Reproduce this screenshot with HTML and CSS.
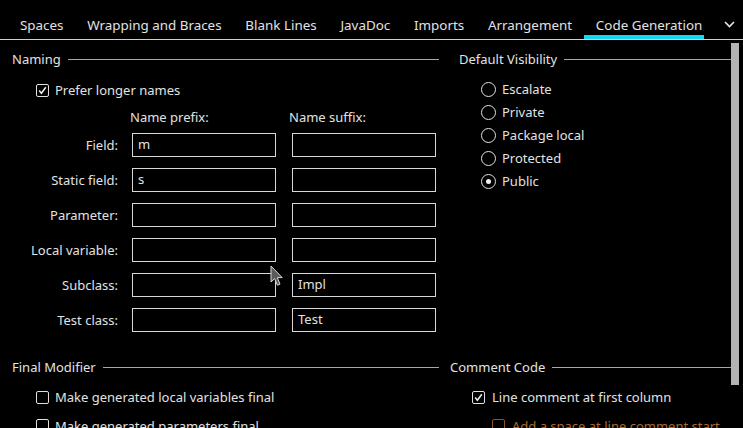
FILE: index.html
```html
<!DOCTYPE html>
<html>
<head>
<meta charset="utf-8">
<link rel="stylesheet" href="styles.css">
</head>
<body>
<div class="tabs">
  <div class="tab">Spaces</div>
  <div class="tab">Wrapping and Braces</div>
  <div class="tab">Blank Lines</div>
  <div class="tab">JavaDoc</div>
  <div class="tab">Imports</div>
  <div class="tab">Arrangement</div>
  <div class="tab active">Code Generation</div>
  <div class="more"><svg width="11" height="7" viewBox="0 0 11 7"><polyline points="1,1 5.5,5.5 10,1" fill="none" stroke="#e8e8e8" stroke-width="1.6"/></svg></div>
</div>
<div class="body">
  <div class="main">
    <div class="top">
      <div class="col-left">
        <div class="sec-title">Naming</div>
        <div class="check-row ind1">
          <span class="box checked"><svg width="11" height="11" viewBox="0 0 11 11"><polyline points="2.2,5.6 4.4,8.2 8.8,2.2" fill="none" stroke="#f0f0f0" stroke-width="1.5"/></svg></span>
          <span>Prefer longer names</span>
        </div>
        <div class="name-grid">
          <span></span>
          <span class="head h1">Name prefix:</span>
          <span class="head h2">Name suffix:</span>

          <span class="lbl">Field:</span>
          <span class="field">m</span>
          <span class="field f2"></span>

          <span class="lbl">Static field:</span>
          <span class="field">s</span>
          <span class="field f2"></span>

          <span class="lbl">Parameter:</span>
          <span class="field"></span>
          <span class="field f2"></span>

          <span class="lbl">Local variable:</span>
          <span class="field"></span>
          <span class="field f2"></span>

          <span class="lbl">Subclass:</span>
          <span class="field"></span>
          <span class="field f2">Impl</span>

          <span class="lbl">Test class:</span>
          <span class="field"></span>
          <span class="field f2">Test</span>
        </div>
      </div>
      <div class="col-right">
        <div class="sec-title">Default Visibility</div>
        <div class="radios">
          <div class="radio-row"><span class="radio"></span><span>Escalate</span></div>
          <div class="radio-row"><span class="radio"></span><span>Private</span></div>
          <div class="radio-row"><span class="radio"></span><span>Package local</span></div>
          <div class="radio-row"><span class="radio"></span><span>Protected</span></div>
          <div class="radio-row"><span class="radio on"></span><span>Public</span></div>
        </div>
      </div>
    </div>
    <div class="bottom">
      <div class="col-left2">
        <div class="sec-title">Final Modifier</div>
        <div class="checks">
          <div class="check-row ind1"><span class="box"></span><span>Make generated local variables final</span></div>
          <div class="check-row ind1"><span class="box"></span><span>Make generated parameters final</span></div>
        </div>
      </div>
      <div class="col-right2">
        <div class="sec-title">Comment Code</div>
        <div class="checks">
          <div class="check-row ind2">
            <span class="box checked"><svg width="11" height="11" viewBox="0 0 11 11"><polyline points="2.2,5.6 4.4,8.2 8.8,2.2" fill="none" stroke="#f0f0f0" stroke-width="1.5"/></svg></span>
            <span>Line comment at first column</span>
          </div>
          <div class="check-row ind3 dim"><span class="box"></span><span>Add a space at line comment start</span></div>
        </div>
      </div>
    </div>
  </div>
  <div class="scrollbar"></div>
</div>
<svg class="cursor" width="14" height="23" viewBox="0 0 14 23">
  <path d="M1 1 L1 17 L4.6 13.6 L7.4 20.2 L10 19.1 L7.3 12.6 L12.2 12.6 Z" fill="#5a5a5a" stroke="#d8d8d8" stroke-width="1" stroke-linejoin="round"/>
</svg>
</body>
</html>
```
FILE: styles.css
```css
html, body {
  margin: 0;
  padding: 0;
}
body {
  width: 743px;
  height: 428px;
  overflow: hidden;
  background: #000;
  color: #e2e2e2;
  font-family: "Noto Sans", "Open Sans", sans-serif;
  font-size: 13px;
  line-height: 18px;
  position: relative;
}
.tabs {
  display: flex;
  height: 39px;
  border-bottom: 1px solid #cfcfcf;
  padding-left: 8px;
  box-sizing: content-box;
  font-size: 13.4px;
}
.tab {
  position: relative;
  padding: 11px 11.9px 0;
  display: flex;
  align-items: center;
  white-space: nowrap;
}
.tab.active {
  padding-right: 2px;
}
.tab.active::after {
  content: "";
  position: absolute;
  left: 0;
  right: 0;
  bottom: 0;
  height: 4px;
  background: #14d6f2;
}
.more {
  margin-left: auto;
  width: 19px;
  display: flex;
  align-items: center;
  padding-top: 10px;
}
.body {
  display: flex;
}
.main {
  width: 719px;
  padding-left: 12px;
}
.scrollbar {
  width: 8px;
  height: 342px;
  margin-top: 3px;
  background: #b4b4b4;
}
.top {
  display: flex;
}
.col-left {
  width: 427px;
}
.col-right {
  margin-left: 20px;
  flex: 1;
}
.sec-title {
  display: flex;
  align-items: center;
  height: 18px;
  margin-top: 10px;
  gap: 7px;
  white-space: nowrap;
}
.sec-title::after {
  content: "";
  flex: 1;
  height: 1px;
  background: #a8a8a8;
}
.check-row {
  display: flex;
  align-items: center;
  height: 18px;
  gap: 6px;
  white-space: nowrap;
}
.col-left > .check-row {
  margin-top: 13px;
}
.ind1 {
  margin-left: 24px;
}
.ind2 {
  margin-left: 22px;
  gap: 7px;
}
.ind3 {
  margin-left: 42px;
  gap: 7px;
}
.box {
  width: 13px;
  height: 13px;
  box-sizing: border-box;
  border: 1px solid #e0e0e0;
  border-radius: 2px;
  display: flex;
  align-items: center;
  justify-content: center;
  flex: none;
}
.dim {
  color: #ad6b2e;
}
.dim .box {
  border-color: #8a5426;
}
.name-grid {
  display: grid;
  grid-template-columns: 106px 144px 146px;
  grid-template-rows: 14px;
  grid-auto-rows: 24px;
  column-gap: 14px;
  row-gap: 11px;
  margin-top: 9px;
}
.head {
  align-self: start;
  white-space: nowrap;
  height: 14px;
  overflow: visible;
}
.h1 {
  margin-left: -2px;
}
.h2 {
  margin-left: -1px;
}
.lbl {
  text-align: right;
  align-self: center;
  white-space: nowrap;
}
.field {
  box-sizing: border-box;
  height: 24px;
  border: 1px solid #d8d8d8;
  padding-left: 5px;
  line-height: 21px;
}
.f2 {
  margin-left: 2px;
}
.radios {
  margin-top: 12px;
  margin-left: 22px;
  display: flex;
  flex-direction: column;
  gap: 5px;
}
.radio-row {
  display: flex;
  align-items: center;
  height: 18px;
  gap: 6px;
}
.radio {
  width: 15px;
  height: 15px;
  box-sizing: border-box;
  border: 1.2px solid #e2e2e2;
  border-radius: 50%;
  display: flex;
  align-items: center;
  justify-content: center;
}
.radio.on::after {
  content: "";
  width: 5px;
  height: 5px;
  border-radius: 50%;
  background: #f0f0f0;
}
.bottom {
  display: flex;
  margin-top: 26px;
}
.col-left2 {
  width: 427px;
}
.col-right2 {
  margin-left: 11px;
  flex: 1;
}
.bottom .sec-title {
  margin-top: 0;
}
.checks {
  margin-top: 12px;
  display: flex;
  flex-direction: column;
  gap: 10.6px;
}
.cursor {
  position: absolute;
  left: 270px;
  top: 265px;
}
```
